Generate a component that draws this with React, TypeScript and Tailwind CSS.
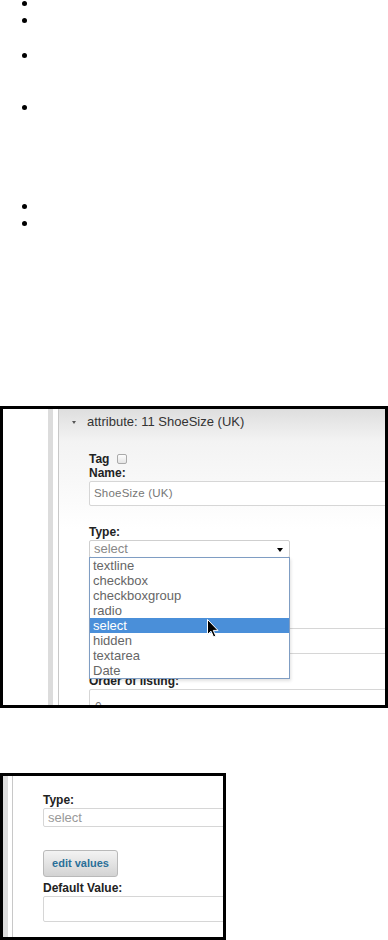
const options = ['textline', 'checkbox', 'checkboxgroup', 'radio', 'select', 'hidden', 'textarea', 'Date']

function Cursor() {
  return (
    <svg width="12" height="19" viewBox="0 0 12 19" className="absolute left-[117px] top-[61px]">
      <path d="M0.5 0.5 L0.5 15.5 L4 12.2 L6.6 18 L8.8 17 L6.3 11.4 L11 11.4 Z" fill="#000" stroke="#fff" strokeWidth="1" />
    </svg>
  )
}

function Label({ children }: { children: React.ReactNode }) {
  return <div className="h-[15px] leading-[15px] text-[12px] font-bold text-[#222]">{children}</div>
}

function AttributeEditor() {
  return (
    <div className="mt-[180px] h-[302px] border-[3px] border-black flex overflow-hidden">
      <div className="w-[45px] bg-white" />
      <div className="w-[5px] bg-[#dcdcdc]" />
      <div className="w-[6px] bg-white border-r border-[#c8c8c8]" />
      <div className="flex-1 overflow-hidden bg-[linear-gradient(to_bottom,#dedede_0px,#f3f3f3_32px,#f8f8f8_70px,#ffffff_120px)]">
        <div className="h-[26px] flex items-center pl-[13px] gap-[11px]">
          <span className="w-0 h-0 border-l-[2.5px] border-r-[2.5px] border-t-[3px] border-l-transparent border-r-transparent border-t-[#555]" />
          <span className="text-[13px] text-[#333]">attribute: 11 ShoeSize (UK)</span>
        </div>
        <div className="pl-[30px] pt-[16px]">
          <div className="h-[15px] flex items-center gap-[8px]">
            <span className="text-[12px] font-bold text-[#222]">Tag</span>
            <span className="w-[10px] h-[10px] rounded-[2px] border border-[#aaa] bg-[linear-gradient(to_bottom,#fdfdfd,#e4e4e4)]" />
          </div>
          <Label>Name:</Label>
          <div className="h-[25px] w-[320px] border border-[#d6d6d6] rounded-[2px] bg-white pl-[4px] flex items-center text-[11.5px] text-[#777] tracking-[0.2px]">
            ShoeSize (UK)
          </div>
          <div className="mt-[19px]">
            <Label>Type:</Label>
          </div>
          <div className="relative h-[18px] w-[201px] border border-[#cfcfcf] rounded-[2px] bg-white pl-[4px] flex items-center text-[13px] text-[#888]">
            select
            <span className="absolute right-[6px] top-[7px] w-0 h-0 border-l-[3px] border-r-[3px] border-t-[4px] border-l-transparent border-r-transparent border-t-black" />
            <div className="absolute left-[-1px] top-[16px] w-[201px] border border-[#7f9dc3] bg-white shadow-[1px_2px_3px_rgba(0,0,0,0.12)] z-10">
              {options.map((o) => (
                <div
                  key={o}
                  className={
                    o === 'select'
                      ? 'h-[15px] leading-[15px] px-[3px] text-[13px] bg-[#4a8fd9] text-white'
                      : 'h-[15px] leading-[15px] px-[3px] text-[13px] text-[#666]'
                  }
                >
                  {o}
                </div>
              ))}
              <Cursor />
            </div>
          </div>
          <div className="mt-[70px] h-[26px] w-[320px] border border-[#d6d6d6] rounded-[2px] bg-white" />
          <div className="mt-[20px]">
            <Label>Order of listing:</Label>
          </div>
          <div className="h-[25px] w-[320px] border border-[#d6d6d6] rounded-[2px] bg-white pl-[5px] pt-[10px] text-[12px] text-[#777] leading-[14px]">
            0
          </div>
        </div>
      </div>
    </div>
  )
}

function ValuesPanel() {
  return (
    <div className="mt-[65px] w-[226px] h-[167px] border-[3px] border-black flex overflow-hidden">
      <div className="w-[5px] bg-[#dcdcdc]" />
      <div className="w-[5px] bg-white border-r border-[#c8c8c8]" />
      <div className="flex-1 overflow-hidden bg-white pl-[30px] pt-[17px]">
        <Label>Type:</Label>
        <div className="h-[19px] w-[220px] border border-[#d6d6d6] rounded-[2px] bg-white pl-[4px] flex items-center text-[13px] text-[#999]">
          select
        </div>
        <div className="mt-[23px] h-[27px] w-[75px] rounded-[3px] border border-[#b9b9b9] bg-[linear-gradient(to_bottom,#f3f3f3,#d3d3d3)] flex items-center justify-center text-[11px] font-bold text-[#2a6f98]">
          edit values
        </div>
        <div className="mt-[4px]">
          <Label>Default Value:</Label>
        </div>
        <div className="h-[26px] w-[220px] border border-[#d6d6d6] rounded-[2px] bg-white" />
      </div>
    </div>
  )
}

export default function App() {
  const dots = ['mt-[1px]', 'mt-[12px]', 'mt-[30px]', 'mt-[47px]', 'mt-[94px]', 'mt-[12px]']
  return (
    <div className="w-[388px] h-[940px] bg-white overflow-hidden font-['Liberation_Sans',Arial,sans-serif]">
      <div className="pl-[22px] flex flex-col">
        {dots.map((m, i) => (
          <span key={i} className={`${m} w-[5px] h-[5px] rounded-full bg-black`} />
        ))}
      </div>
      <AttributeEditor />
      <ValuesPanel />
    </div>
  )
}
